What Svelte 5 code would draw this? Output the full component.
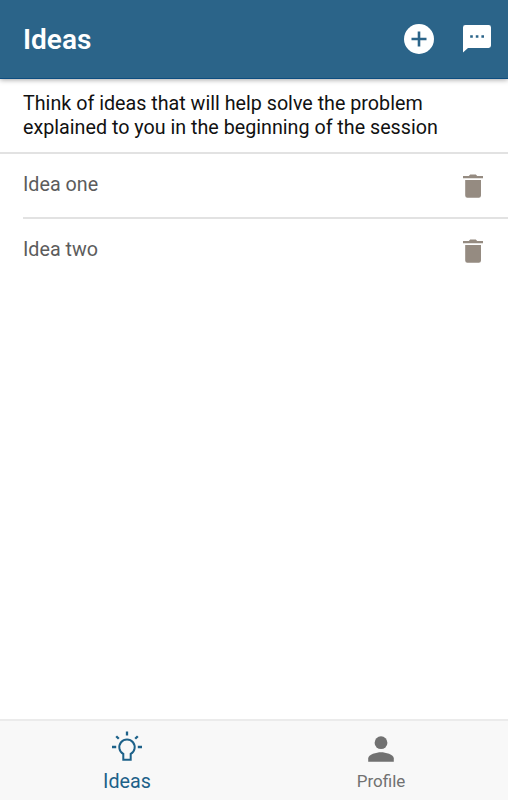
<script lang="ts">
  let ideas = $state([
    { id: 1, text: "Idea one" },
    { id: 2, text: "Idea two" },
  ]);

  let activeTab = $state("ideas");

  const addIdea = () => {
    ideas.push({ id: Date.now(), text: "New idea" });
  };

  const deleteIdea = (id: number) => {
    ideas = ideas.filter((idea) => idea.id !== id);
  };
</script>

<div class="page">
  <header class="toolbar">
    <h1>Ideas</h1>
    <div class="toolbar-actions">
      <button aria-label="Add idea" onclick={addIdea}>
        <svg width="30" height="30" viewBox="0 0 30 30">
          <circle cx="15" cy="15" r="15" fill="#fff" />
          <path d="M15 7.5v15M7.5 15h15" stroke="#2b6489" stroke-width="2.6" />
        </svg>
      </button>
      <button aria-label="Messages">
        <svg width="28" height="28" viewBox="0 0 28 28">
          <path
            d="M2.4 0h23.2A2.4 2.4 0 0 1 28 2.4v18.2a2.4 2.4 0 0 1-2.4 2.4H5L0 27.4V2.4A2.4 2.4 0 0 1 2.4 0z"
            fill="#fff"
          />
          <path
            d="M7.2 10.2h2.6v2.6H7.2zM12.8 10.2h2.6v2.6h-2.6zM18.4 10.2H21v2.6h-2.6z"
            fill="#2b6489"
          />
        </svg>
      </button>
    </div>
  </header>

  <main>
    <p class="question">
      Think of ideas that will help solve the problem explained to you in the beginning of the session
    </p>

    <ul class="idea-list">
      {#each ideas as idea (idea.id)}
        <li>
          <span>{idea.text}</span>
          <button aria-label="Delete idea" onclick={() => deleteIdea(idea.id)}>
            <svg width="20" height="24" viewBox="0 0 20 24">
              <path
                d="M7.2.4h5.6l1.4 1.6H20v2.2H0V2h5.8zM2.2 6h15.8v15.5a2.2 2.2 0 0 1-2.2 2.2H4.4a2.2 2.2 0 0 1-2.2-2.2z"
                fill="#958b81"
              />
            </svg>
          </button>
        </li>
      {/each}
    </ul>
  </main>

  <nav class="tabs">
    <button class:active={activeTab === "ideas"} onclick={() => (activeTab = "ideas")}>
      <svg width="30" height="30" viewBox="0 0 30 30" fill="none" stroke="currentColor" stroke-width="2">
        <path d="M11.3 28.8v-5.9a7.7 7.7 0 1 1 7.4 0v5.9z" />
        <path
          d="M15 .5v4.1M0 16h4.2M25.8 16H30M4.2 5.2l2.6 2.6M25.8 5.2l-2.6 2.6"
          stroke-width="2.3"
        />
      </svg>
      <span>Ideas</span>
    </button>
    <button class:active={activeTab === "profile"} onclick={() => (activeTab = "profile")}>
      <svg width="30" height="30" viewBox="0 0 30 30" fill="currentColor">
        <circle cx="15" cy="11.7" r="6.4" />
        <path d="M2.2 30.8v-3.4c0-4 8.4-6.2 12.8-6.2s12.8 2.2 12.8 6.2v3.4z" />
      </svg>
      <span>Profile</span>
    </button>
  </nav>
</div>

<style>
  :global(body) {
    margin: 0;
    font-family: Roboto, "Liberation Sans", sans-serif;
    background: #fff;
  }

  .page {
    display: flex;
    flex-direction: column;
    height: 100vh;
  }

  button {
    padding: 0;
    border: 0;
    background: none;
    font: inherit;
    cursor: pointer;
  }

  svg {
    display: block;
    overflow: visible;
  }

  .toolbar {
    display: flex;
    align-items: center;
    justify-content: space-between;
    box-sizing: border-box;
    height: 79px;
    padding: 0 17px 0 23px;
    background: #2b6489;
    border-bottom: 1px solid #0d4d80;
    box-shadow: 0 1px 5px rgba(0, 0, 0, 0.35);
    z-index: 1;
  }

  h1 {
    margin: 1px 0 0;
    font-size: 28px;
    font-weight: 600;
    line-height: 34px;
    color: #fff;
  }

  .toolbar-actions {
    display: flex;
    align-items: center;
    gap: 29.5px;
  }

  main {
    flex: 1;
  }

  .question {
    box-sizing: border-box;
    height: 75px;
    margin: 0;
    padding: 13px 23px 0;
    border-bottom: 2px solid #e2e2e2;
    font-size: 19.72px;
    line-height: 24px;
    color: #111;
  }

  .idea-list {
    margin: 0;
    padding: 0 0 0 23px;
    list-style: none;
  }

  li {
    display: flex;
    align-items: flex-start;
    justify-content: space-between;
    box-sizing: border-box;
    height: 65px;
    padding: 19px 25px 0 0;
    border-bottom: 2px solid #e2e2e2;
    font-size: 19.72px;
    line-height: 24px;
    color: #5c5c5c;
  }

  li button {
    margin-top: 1px;
  }

  li:last-child {
    border-bottom: 0;
  }

  .tabs {
    display: flex;
    box-sizing: border-box;
    height: 81px;
    border-top: 2px solid #ebebeb;
    background: #f8f8f8;
  }

  .tabs button {
    display: flex;
    flex: 1;
    flex-direction: column;
    align-items: center;
    padding-top: 10px;
    font-size: 17px;
    line-height: 24px;
    color: #717171;
  }

  .tabs span {
    margin-top: 8px;
  }

  .tabs .active {
    font-size: 19.7px;
    color: #1d6189;
  }

  .tabs .active span {
    margin-top: 9px;
  }
</style>
